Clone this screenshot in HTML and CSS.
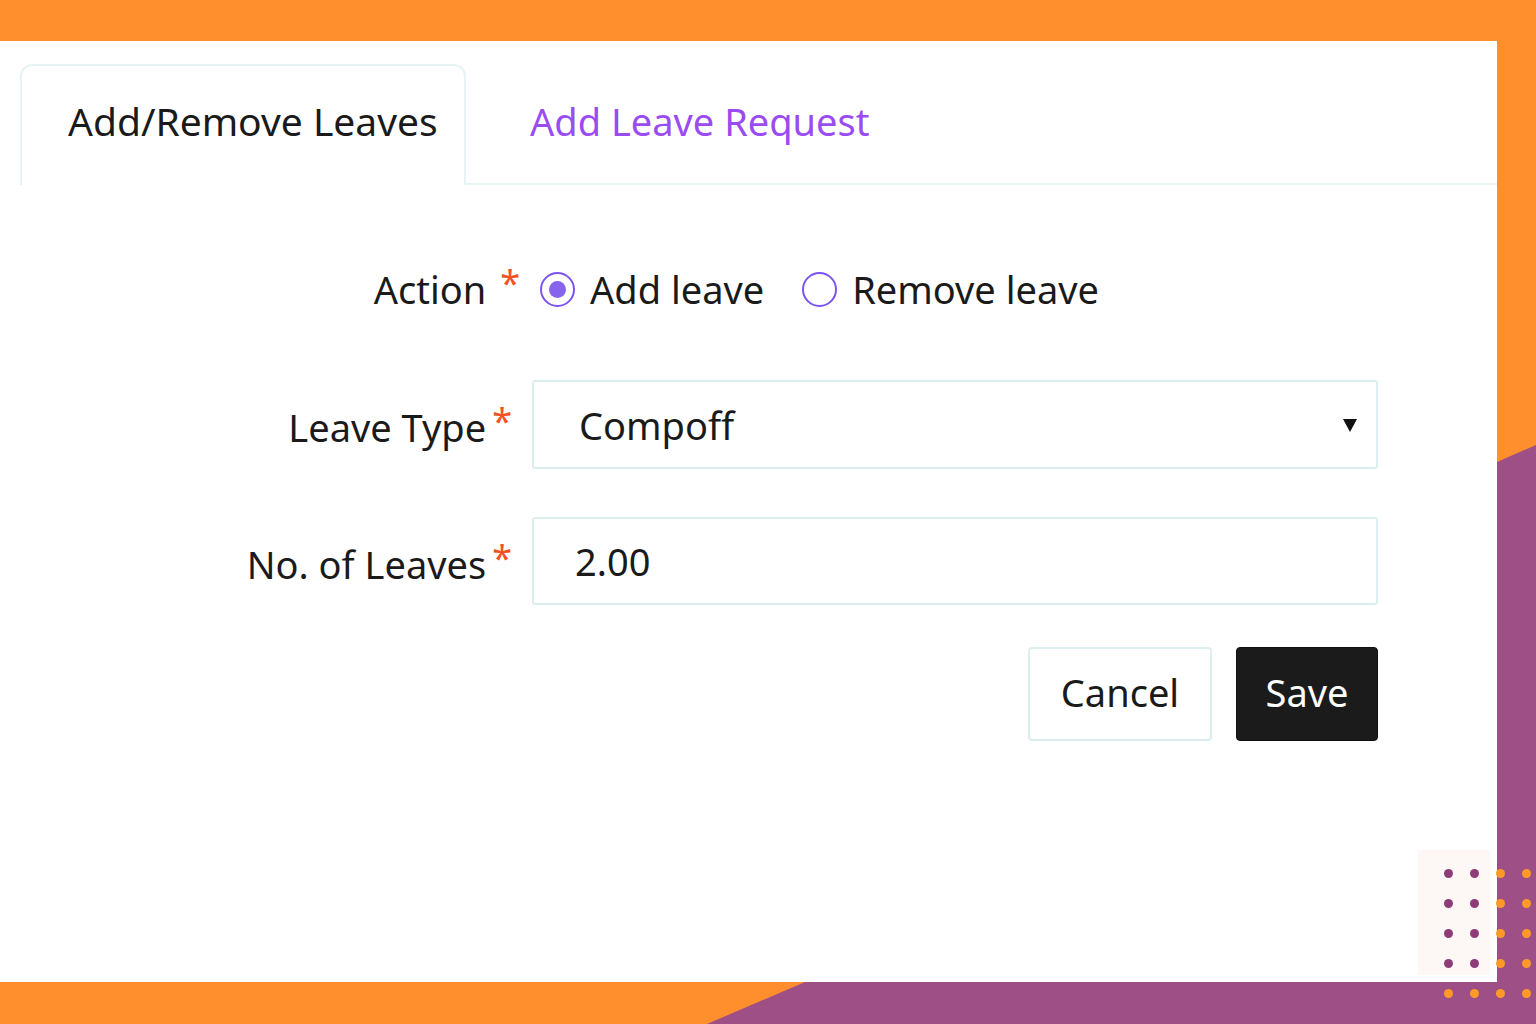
FILE: index.html
```html
<!DOCTYPE html>
<html lang="en">
<head>
<meta charset="utf-8">
<title>Add/Remove Leaves</title>
<link rel="stylesheet" href="styles.css">
</head>
<body>
<svg class="backdrop" width="1536" height="1024" viewBox="0 0 1536 1024" aria-hidden="true">
  <rect width="1536" height="1024" fill="#ff8f2c"/>
  <polygon points="1497,462 1536,445 1536,1024 707,1024 805,982 1497,982" fill="#9e4f85"/>
</svg>
<main class="card">
  <nav class="tabs">
    <div class="tab active">Add/Remove Leaves</div>
    <div class="tab link">Add Leave Request</div>
    <div class="tab-rest"></div>
  </nav>
  <form class="form">
    <div class="row row-action">
      <div class="label">Action <span class="req spaced">*</span></div>
      <div class="radios">
        <label class="radio"><span class="circle checked"></span>Add leave</label>
        <label class="radio"><span class="circle"></span>Remove leave</label>
      </div>
    </div>
    <div class="row row-select">
      <div class="label">Leave Type<span class="req">*</span></div>
      <div class="field select"><span>Compoff</span><span class="caret"></span></div>
    </div>
    <div class="row row-input">
      <div class="label">No. of Leaves<span class="req">*</span></div>
      <div class="field input">2.00</div>
    </div>
    <div class="actions">
      <button type="button" class="btn cancel">Cancel</button>
      <button type="button" class="btn save">Save</button>
    </div>
  </form>
</main>
<div class="dots" aria-hidden="true">
  <div class="dot-panel"></div>
  <span class="dot p" style="left:1444px;top:869px"></span>
  <span class="dot p" style="left:1470px;top:869px"></span>
  <span class="dot o" style="left:1496px;top:869px"></span>
  <span class="dot o" style="left:1522px;top:869px"></span>
  <span class="dot p" style="left:1444px;top:899px"></span>
  <span class="dot p" style="left:1470px;top:899px"></span>
  <span class="dot o" style="left:1496px;top:899px"></span>
  <span class="dot o" style="left:1522px;top:899px"></span>
  <span class="dot p" style="left:1444px;top:929px"></span>
  <span class="dot p" style="left:1470px;top:929px"></span>
  <span class="dot o" style="left:1496px;top:929px"></span>
  <span class="dot o" style="left:1522px;top:929px"></span>
  <span class="dot p" style="left:1444px;top:959px"></span>
  <span class="dot p" style="left:1470px;top:959px"></span>
  <span class="dot o" style="left:1496px;top:959px"></span>
  <span class="dot o" style="left:1522px;top:959px"></span>
  <span class="dot o" style="left:1444px;top:989px"></span>
  <span class="dot o" style="left:1470px;top:989px"></span>
  <span class="dot o" style="left:1496px;top:989px"></span>
  <span class="dot o" style="left:1522px;top:989px"></span>
</div>
</body>
</html>
```

FILE: styles.css
```css
* { box-sizing: border-box; }
html, body {
  margin: 0;
  width: 1536px;
  height: 1024px;
  overflow: hidden;
}
body {
  position: relative;
  font-family: "Noto Sans", "Open Sans", sans-serif;
  color: #1a1a1a;
  padding-top: 41px;
}
.backdrop {
  position: absolute;
  left: 0;
  top: 0;
  z-index: 0;
}
.card {
  position: relative;
  z-index: 1;
  width: 1497px;
  height: 941px;
  background: #ffffff;
  padding-top: 23px;
}
.tabs {
  display: flex;
  align-items: flex-end;
  height: 121px;
  padding-left: 20px;
}
.tab {
  height: 121px;
  display: flex;
  align-items: center;
  font-size: 38px;
  line-height: 1;
  padding-bottom: 6px;
}
.tab.active {
  width: 446px;
  font-size: 39px;
  border: 2px solid #e5f3f3;
  border-bottom: none;
  border-radius: 12px 12px 0 0;
  padding-left: 46px;
  padding-bottom: 10px;
}
.tab.link {
  color: #9a4cf2;
  padding-left: 64px;
  padding-right: 40px;
  border-bottom: 2px solid #e5f3f3;
}
.tab-rest {
  flex: 1;
  height: 121px;
  border-bottom: 2px solid #e5f3f3;
}
.form {
  padding-top: 80px;
  width: 1378px;
}
.row {
  display: flex;
  align-items: center;
}
.label {
  width: 532px;
  flex: none;
  text-align: right;
  font-size: 38px;
  line-height: 1;
  padding-right: 20px;
  white-space: nowrap;
}
.req {
  color: #f4511e;
  font-size: 36px;
  margin-left: 6px;
  vertical-align: 8px;
}
.req.spaced { margin-left: 4px; }
.row-action { height: 50px; }
.row-action .label {
  padding-right: 12px;
  margin-top: -8px;
}
.radios {
  display: flex;
  align-items: center;
  margin-left: 8px;
  margin-top: -2px;
}
.radio {
  display: flex;
  align-items: center;
  font-size: 38px;
  line-height: 1;
  margin-right: 38px;
}
.circle {
  width: 35px;
  height: 35px;
  border-radius: 50%;
  border: 2.5px solid #7b55f2;
  margin-right: 15px;
  display: flex;
  align-items: center;
  justify-content: center;
  flex: none;
}
.circle.checked::after {
  content: "";
  width: 17px;
  height: 17px;
  border-radius: 50%;
  background: #8764ee;
}
.field {
  flex: 1;
  border: 2px solid #dcefef;
  border-radius: 3px;
  font-size: 38px;
  line-height: 1;
  display: flex;
  align-items: center;
}
.row-select { margin-top: 65px; }
.select {
  height: 89px;
  padding-left: 45px;
  padding-right: 19px;
  justify-content: space-between;
}
.caret {
  width: 0;
  height: 0;
  border-left: 7.5px solid transparent;
  border-right: 7.5px solid transparent;
  border-top: 13px solid #111;
  margin-top: 2px;
}
.row-input { margin-top: 48px; }
.input {
  height: 88px;
  padding-left: 41px;
}
.actions {
  margin-top: 42px;
  display: flex;
  justify-content: flex-end;
  gap: 24px;
}
.btn {
  font-family: "Noto Sans", "Open Sans", sans-serif;
  font-size: 38px;
  line-height: 1;
  height: 94px;
  border-radius: 4px;
  cursor: pointer;
  padding: 0 0 4px;
}
.cancel {
  width: 184px;
  background: #ffffff;
  color: #1a1a1a;
  border: 2px solid #dcefef;
}
.save {
  width: 142px;
  background: #1b1b1b;
  color: #ffffff;
  border: 1px solid #111;
}
.dots {
  position: absolute;
  left: 0;
  top: 0;
  width: 0;
  height: 0;
  z-index: 2;
}
.dot-panel {
  position: absolute;
  left: 1418px;
  top: 850px;
  width: 72px;
  height: 125px;
  background: #fdf8f5;
}
.dot {
  position: absolute;
  width: 9px;
  height: 9px;
  border-radius: 50%;
}
.dot.p { background: #8d3c77; }
.dot.o { background: #ff9a28; }
```
